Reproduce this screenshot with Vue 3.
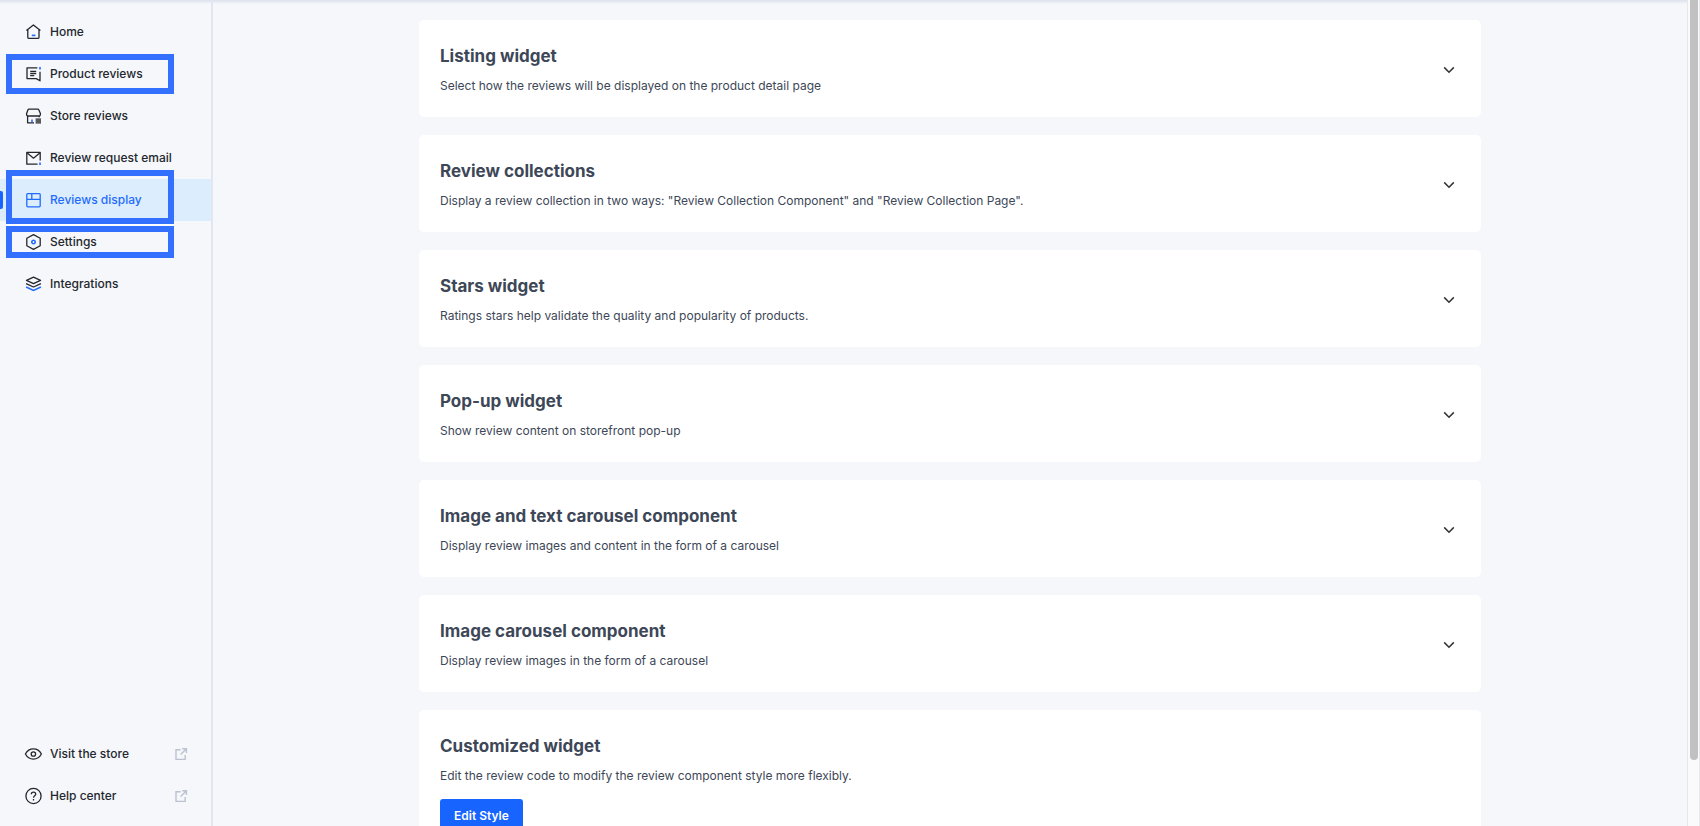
<template>
  <div class="app-layout">
    <aside class="sidebar">
      <nav class="nav" aria-label="Main">
        <a
          v-for="item in mainMenu"
          :key="item.id"
          href="#"
          class="nav-item"
          :class="{ active: item.id === current }"
          @click.prevent="current = item.id"
        >
          <svg class="nav-icon" width="18" height="18" viewBox="0 0 18 18" fill="none" aria-hidden="true">
            <path v-for="d in item.paths" :key="d" :d="d" class="line" />
            <path v-for="d in item.accents" :key="d" :d="d" class="accent" />
          </svg>
          <span>{{ item.label }}</span>
        </a>
      </nav>

      <nav class="nav" aria-label="Links">
        <a v-for="item in linkMenu" :key="item.id" href="#" class="nav-item">
          <svg class="nav-icon" width="18" height="18" viewBox="0 0 18 18" fill="none" aria-hidden="true">
            <path v-for="d in item.paths" :key="d" :d="d" class="line" />
          </svg>
          <span>{{ item.label }}</span>
          <svg class="external-icon" width="14" height="14" viewBox="0 0 14 14" fill="none" aria-hidden="true">
            <path d="M6.6 2.8H2V12.4H11.2V8M8.2 1.7H12.4V6M12.2 1.9L6.6 7.4" />
          </svg>
        </a>
      </nav>

      <div class="marker marker-reviews"></div>
      <div class="marker marker-display"></div>
      <div class="marker marker-settings"></div>
    </aside>

    <main class="content">
      <div class="card-list">
        <section v-for="card in widgets" :key="card.title" class="card">
          <div class="card-text">
            <h2>{{ card.title }}</h2>
            <p>{{ card.desc }}</p>
            <button v-if="card.action" type="button" class="btn-primary">{{ card.action }}</button>
          </div>
          <button v-if="!card.action" type="button" class="toggle" :aria-label="'Expand ' + card.title">
            <svg width="12" height="8" viewBox="0 0 12 8" fill="none" aria-hidden="true">
              <path d="M1.2 1.4L6 6.2L10.8 1.4" stroke="#333" stroke-width="1.5" />
            </svg>
          </button>
        </section>
      </div>
    </main>

    <div class="scrollbar">
      <div class="thumb"></div>
    </div>
  </div>
</template>

<script setup>
import { ref } from 'vue';

const current = ref('display');

const mainMenu = [
  {
    id: 'home',
    label: 'Home',
    paths: ['M2.4 7.6L9.4 2L16.4 7.6M3.8 6.8V14.2Q3.8 15.4 5 15.4H13.8Q15 15.4 15 14.2V6.8'],
    accents: ['M7.8 12.4H11.4'],
  },
  {
    id: 'product',
    label: 'Product reviews',
    paths: ['M13.4 2.8H3V13.6H12.2L16 15.8V6.8', 'M6.2 6.4H12.2M6.2 8.5H12.2M6.2 10.6H10.2'],
    accents: ['M16 2V4.4'],
  },
  {
    id: 'store',
    label: 'Store reviews',
    paths: [
      'M5 2.2H13.8Q14.6 2.2 14.9 3L16.4 6.4V7.4Q16.4 9 14.6 9H4.2Q2.6 9 2.6 7.4V6.4L3.9 3Q4.2 2.2 5 2.2Z',
      'M3.6 9V15.8H10M15.2 9V10.2',
      'M11.6 12.1H17M11.6 14H17M11.6 15.9H17',
    ],
    accents: ['M8 12.6V15'],
  },
  {
    id: 'email',
    label: 'Review request email',
    paths: ['M13.6 15.2H2.8V3.4H16.2V11.6', 'M3 3.8L9.5 9.2L16 3.8'],
    accents: ['M16 13.6V15.9'],
  },
  {
    id: 'display',
    label: 'Reviews display',
    paths: ['M3.8 2.6H15.2Q16.2 2.6 16.2 3.6V14.8Q16.2 15.8 15.2 15.8H3.8Q2.8 15.8 2.8 14.8V3.6Q2.8 2.6 3.8 2.6ZM2.8 8.4H16.2M7.8 2.6V8.4'],
    accents: [],
  },
  {
    id: 'settings',
    label: 'Settings',
    paths: ['M9.5 1.6L16.2 5.2V12.8L9.5 16.4L2.8 12.8V5.2Z'],
    accents: ['M9.5 7.3A1.7 1.7 0 1 1 9.5 10.7A1.7 1.7 0 1 1 9.5 7.3Z'],
  },
  {
    id: 'integrations',
    label: 'Integrations',
    paths: ['M9.5 2.2L16.5 5.4L9.5 8.6L2.5 5.4Z', 'M2.1 8.6L9.5 12L16.9 8.6'],
    accents: ['M2.1 12L9.5 15.4L16.9 12'],
  },
];

const linkMenu = [
  {
    id: 'visit',
    label: 'Visit the store',
    paths: [
      'M1.4 9C5 2.2 13.8 2.2 17.4 9C13.8 15.8 5 15.8 1.4 9Z',
      'M9.4 6.8A2.2 2.2 0 1 1 9.4 11.2A2.2 2.2 0 1 1 9.4 6.8Z',
    ],
  },
  {
    id: 'help',
    label: 'Help center',
    paths: [
      'M9.5 1.4A7.6 7.6 0 1 1 9.5 16.6A7.6 7.6 0 1 1 9.5 1.4Z',
      'M7.3 7.2C7.3 4.4 11.7 4.4 11.7 7.2C11.7 8.8 9.5 8.8 9.5 10.8M9.5 12V13.4',
    ],
  },
];

const widgets = [
  { title: 'Listing widget', desc: 'Select how the reviews will be displayed on the product detail page' },
  {
    title: 'Review collections',
    desc: 'Display a review collection in two ways: "Review Collection Component" and "Review Collection Page".',
  },
  { title: 'Stars widget', desc: 'Ratings stars help validate the quality and popularity of products.' },
  { title: 'Pop-up widget', desc: 'Show review content on storefront pop-up' },
  {
    title: 'Image and text carousel component',
    desc: 'Display review images and content in the form of a carousel',
  },
  { title: 'Image carousel component', desc: 'Display review images in the form of a carousel' },
  {
    title: 'Customized widget',
    desc: 'Edit the review code to modify the review component style more flexibly.',
    action: 'Edit Style',
  },
];
</script>

<style>
body {
  margin: 0;
  background: #f5f7fb;
}
</style>

<style scoped>
.app-layout {
  position: relative;
  display: flex;
  height: 100vh;
  overflow: hidden;
  background: #f5f7fb;
  font-family: Inter, "Liberation Sans", sans-serif;
  font-size: 12px;
  line-height: 20px;
}

.app-layout::before {
  content: '';
  position: absolute;
  inset: 0 13px auto 0;
  height: 4px;
  background: linear-gradient(#dce1eb, #f5f7fb);
}

.sidebar {
  position: relative;
  display: flex;
  flex-direction: column;
  justify-content: space-between;
  flex: none;
  box-sizing: border-box;
  width: 213px;
  padding: 11px 0 9px;
  border-right: 2px solid #e3e6f0;
}

.nav {
  display: flex;
  flex-direction: column;
}

.nav-item {
  position: relative;
  display: flex;
  align-items: center;
  height: 42px;
  padding: 0 23px 0 24px;
  color: #24272e;
  font-weight: 500;
  text-decoration: none;
  white-space: nowrap;
}

.nav-item.active {
  background: #dcedfe;
  color: #1f6bff;
}

.nav-item.active::before {
  content: '';
  position: absolute;
  left: 0;
  top: 12px;
  width: 3px;
  height: 18px;
  border-radius: 0 2px 2px 0;
  background: #1764ff;
}

.nav-icon {
  flex: none;
  margin-right: 8px;
}

.line {
  stroke: currentColor;
  stroke-width: 1.3;
  stroke-linejoin: round;
}

.accent {
  stroke: #1f6bff;
  stroke-width: 1.6;
}

.external-icon {
  margin-left: auto;
}

.external-icon path {
  stroke: #bcc2d0;
  stroke-width: 1.4;
}

.marker {
  position: absolute;
  left: 6px;
  box-sizing: border-box;
  width: 168px;
  border: 6px solid #3370ff;
  pointer-events: none;
}

.marker-reviews {
  top: 54px;
  height: 40px;
}

.marker-display {
  top: 170px;
  height: 54px;
}

.marker-settings {
  top: 226px;
  height: 32px;
  box-shadow: 0 -2px #fff;
}

.content {
  flex: 1;
  min-width: 0;
  padding: 20px 24px;
}

.card-list {
  display: flex;
  flex-direction: column;
  gap: 18px;
  max-width: 1062px;
  margin: 0 auto;
}

.card {
  display: flex;
  align-items: center;
  justify-content: space-between;
  padding: 23px 26px 21px 21px;
  border-radius: 5px;
  background: #fff;
  color: #3d4757;
}

.card h2 {
  margin: 0 0 7px;
  font-size: 17px;
  font-weight: 700;
  line-height: 26px;
}

.card p {
  margin: 0;
}

.toggle {
  display: flex;
  padding: 0;
  border: none;
  background: none;
  cursor: pointer;
}

.btn-primary {
  display: block;
  height: 34px;
  margin-top: 13px;
  padding: 0 14px;
  border: none;
  border-radius: 3px;
  background: #1764ff;
  color: #fff;
  font: 600 12px/20px Inter, "Liberation Sans", sans-serif;
  cursor: pointer;
}

.scrollbar {
  flex: none;
  box-sizing: border-box;
  width: 13px;
  padding: 0 2px;
  border: 1px solid #e8e8ec;
  border-width: 0 1px;
  background: #fafafa;
}

.thumb {
  width: 8px;
  height: 92%;
  border-radius: 0 0 4px 4px;
  background: #c1c1c1;
}
</style>
